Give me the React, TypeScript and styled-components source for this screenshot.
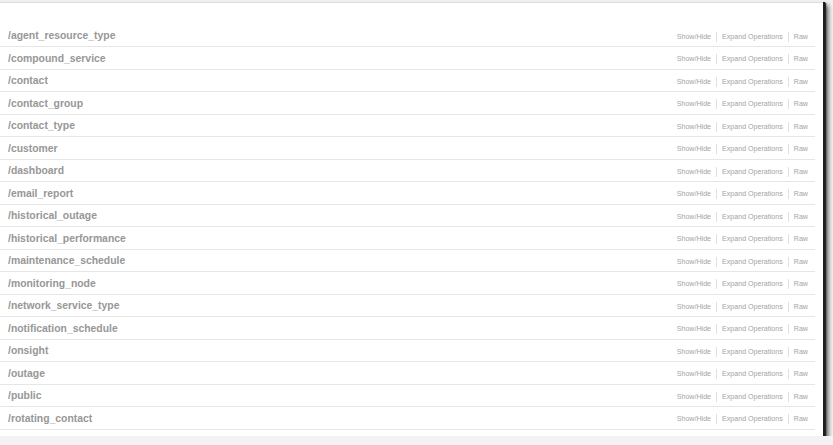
import React from "react";
import styled, { createGlobalStyle } from "styled-components";

const resources = [
  "agent_resource_type",
  "compound_service",
  "contact",
  "contact_group",
  "contact_type",
  "customer",
  "dashboard",
  "email_report",
  "historical_outage",
  "historical_performance",
  "maintenance_schedule",
  "monitoring_node",
  "network_service_type",
  "notification_schedule",
  "onsight",
  "outage",
  "public",
  "rotating_contact"
];

const GlobalStyle = createGlobalStyle`
  html, body {
    margin: 0;
    padding: 0;
    background: #f3f3f3;
    font-family: "Liberation Sans", Arial, sans-serif;
  }
`;

const Window = styled.div`
  width: 823px;
  height: 436px;
  background: #fff;
  box-sizing: border-box;
  overflow: hidden;
  box-shadow: 2px 2px 0 #1c1c1c, 3px 3px 1px #262626, 5px 5px 5px rgba(0, 0, 0, 0.7);
`;

const TopBar = styled.div`
  height: 2px;
  background: #efefef;
  border-bottom: 1px solid #dcdcdc;
`;

const ResourceList = styled.ul`
  list-style: none;
  margin: 0;
  padding: 21.5px 8px 0 0;
`;

const Row = styled.li`
  height: 22.5px;
  box-sizing: border-box;
  border-bottom: 1px solid #e6e6e6;
  display: flex;
  align-items: center;
  justify-content: space-between;
  padding: 0 7px 0 8px;
`;

const Path = styled.a`
  font-size: 10.4px;
  font-weight: bold;
  color: #979797;
  text-decoration: none;
  padding-top: 1px;
`;

const Links = styled.div`
  display: flex;
  align-items: center;
  padding-top: 3px;
`;

const Link = styled.a`
  font-size: 7.1px;
  color: #a4a4a4;
  text-decoration: none;
`;

const Divider = styled.span`
  display: inline-block;
  width: 0;
  height: 10px;
  border-left: 1px solid #e0e0e0;
  margin: 0 5px;
`;

export default function App() {
  return (
    <>
      <GlobalStyle />
      <Window>
        <TopBar />
        <ResourceList>
          {resources.map((name) => (
            <Row key={name}>
              <Path href="#">/{name}</Path>
              <Links>
                <Link href="#">Show/Hide</Link>
                <Divider />
                <Link href="#">Expand Operations</Link>
                <Divider />
                <Link href="#">Raw</Link>
              </Links>
            </Row>
          ))}
        </ResourceList>
      </Window>
    </>
  );
}
